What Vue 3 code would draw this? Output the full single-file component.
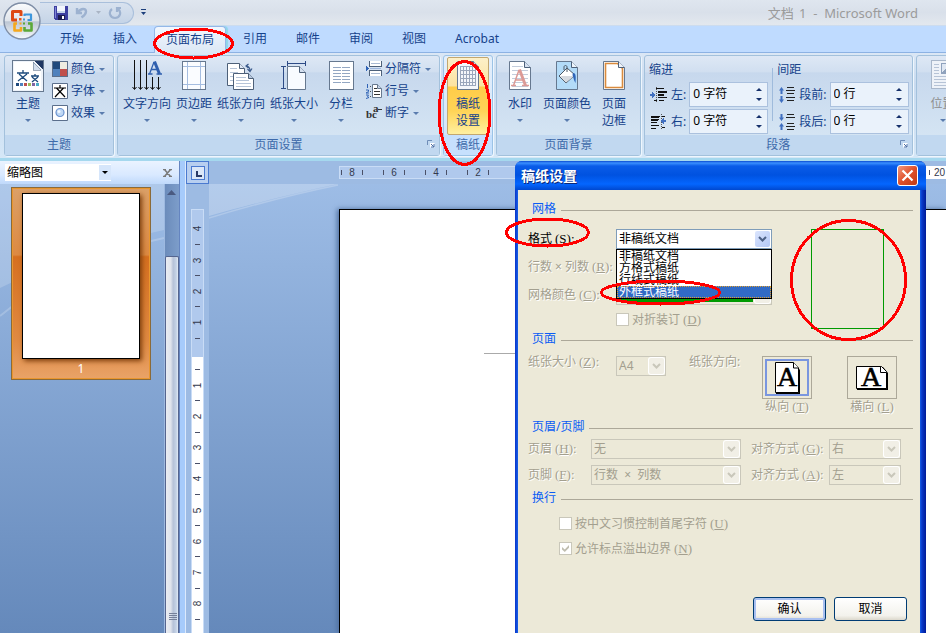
<script setup>
import { ref } from 'vue'

const tabs = ['开始', '插入', '页面布局', '引用', '邮件', '审阅', '视图', 'Acrobat']
const activeTab = ref('页面布局')

const indentLeft = ref('0 字符')
const indentRight = ref('0 字符')
const spaceBefore = ref('0 行')
const spaceAfter = ref('0 行')

const formats = ['非稿纸文档', '方格式稿纸', '行线式稿纸', '外框式稿纸']
const format = ref('非稿纸文档')
const hovered = ref('外框式稿纸')

const marginTicks = ['4', '', '3', '', '2', '', '1', '']
const pageTicks = ['', '1', '', '2', '', '3', '', '4', '', '5', '', '6', '', '7', '', '8', '']
const topTicks = ['8', '6', '4', '2']
const smallText = ref(false)
const overflowPunct = ref(true)
const foldBinding = ref(false)
</script>

<template>
  <div class="app">
    <header class="titlebar">
      <div class="qat">
        <button class="plain" aria-label="保存">
          <svg width="14" height="14" viewBox="0 0 14 14" shape-rendering="crispEdges">
            <path d="M0 0h14v14H1l-1-1z" fill="#3d3fa0" />
            <path d="M1 1h1v11H1z" fill="#7f86d8" />
            <path d="M3 0h8v7H3z" fill="#f2f6fc" />
            <path d="M3 5h8v2H3z" fill="#c5d3ea" />
            <path d="M4 9h7v5H4z" fill="#1c1c50" />
            <path d="M8 10h2v3H8z" fill="#fff" />
          </svg>
        </button>
        <button class="plain" aria-label="撤消">
          <svg width="14" height="14" viewBox="0 0 14 14">
            <path d="M2 2v5h5M3 6c3-4 8-4 8-.5 0 3-2.500 4.500-4.500 6" fill="none" stroke="#9db2d0" stroke-width="2.400" />
          </svg>
        </button>
        <svg class="qat-caret" width="5" height="3" viewBox="0 0 5 3"><path d="M0 0h5L2.500 3z" fill="#a9b4c4" /></svg>
        <button class="plain" aria-label="重复">
          <svg width="14" height="14" viewBox="0 0 14 14">
            <path d="M4 3C0 6 2 12 7 12s7-6 3-9M13 2H9v4" fill="none" stroke="#9db2d0" stroke-width="2.200" />
          </svg>
        </button>
      </div>
      <button class="plain customize" aria-label="自定义快速访问工具栏">
        <svg width="7" height="7" viewBox="0 0 7 7"><path d="M1 0h5v1H1zM1 3h5L3.500 6z" fill="#1d3f7c" /></svg>
      </button>
      <h1 class="title"><span class="doc">文档</span> 1 &nbsp;- &nbsp;Microsoft Word</h1>
    </header>

    <nav class="tabs">
      <button
        v-for="t in tabs"
        :key="t"
        class="tab"
        :class="{ active: t === activeTab }"
        @click="activeTab = t"
      >{{ t }}</button>
    </nav>

    <div class="ribbon">
      <section class="group theme">
        <div class="tools">
          <button class="big">
            <svg width="32" height="32" viewBox="0 0 32 32" shape-rendering="crispEdges">
              <path d="M.5.5h31v31H.5z" fill="#eef3fa" stroke="#66788f" />
              <path d="M2 2h19l8 8v20H2z" fill="#fff" />
              <path d="M22 1h9v9z" fill="#1f3763" /><path d="M21 2l8 8h-8z" fill="#d3deee" stroke="#66788f" stroke-width=".6" />
              <path d="M5 13h12M11 10v3M7 14l8 7M15 14l-9 7M19 16h8M23 14v2M20 17l6 5M26 17l-6 5" fill="none" stroke="#1d4a7c" stroke-width="1.300" shape-rendering="auto" />
              <path d="M4 23h3v3H4z" fill="#1f497d" /><path d="M8 23h3v3H8z" fill="#4f81bd" />
              <path d="M12 23h3v3h-3z" fill="#c0504d" /><path d="M16 23h3v3h-3z" fill="#9bbb59" />
              <path d="M20 23h3v3h-3z" fill="#8064a2" /><path d="M24 23h3v3h-3z" fill="#4bacc6" />
            </svg>
            <span>主题</span>
            <i class="caret"></i>
          </button>
          <div class="stack">
            <button class="small">
              <svg width="16" height="16" viewBox="0 0 16 16" shape-rendering="crispEdges">
                <path d="M0 0h16v16H0z" fill="#5b6f8c" /><path d="M1 1h7v7H1z" fill="#1f497d" /><path d="M8 1h7v7H8z" fill="#eeece1" />
                <path d="M1 8h7v7H1z" fill="#4f81bd" /><path d="M8 8h7v7H8z" fill="#c0504d" />
              </svg>
              <span>颜色</span><i class="caret"></i>
            </button>
            <button class="small">
              <svg width="16" height="16" viewBox="0 0 16 16">
                <path d="M.5.5h15v15H.5z" fill="#fff" stroke="#5b6f8c" />
                <path d="M2 5h12M8 2v3M4.500 5l8.500 9M11.500 5L3 14" fill="none" stroke="#000" stroke-width="1.200" />
              </svg>
              <span>字体</span><i class="caret"></i>
            </button>
            <button class="small">
              <svg width="16" height="16" viewBox="0 0 16 16">
                <path d="M.5.5h15v15H.5z" fill="#fff" stroke="#5b6f8c" />
                <circle cx="8" cy="7.500" r="4" fill="#bfd8f5" stroke="#6b93cf" stroke-width="1.200" />
                <circle cx="7" cy="6.500" r="1.500" fill="#f3f9ff" />
              </svg>
              <span>效果</span><i class="caret"></i>
            </button>
          </div>
        </div>
        <h2 class="caption">主题</h2>
      </section>

      <section class="group">
        <div class="tools">
          <button class="big">
            <svg width="32" height="32" viewBox="0 0 32 32">
              <path d="M3.500 0v29M9.500 0v29M15.500 0v29M21.500 17v12M27.500 17v12" stroke="#111" shape-rendering="crispEdges" />
              <path d="M1.500 27l2 2.500 2-2.500M7.500 27l2 2.500 2-2.500M13.500 27l2 2.500 2-2.500M19.500 27l2 2.500 2-2.500M25.500 27l2 2.500 2-2.500" fill="none" stroke="#111" />
              <path d="M18.500 14L23 2" fill="none" stroke="#2f5fae" stroke-width="1.300" />
              <path d="M23.500 1.500L28.500 14" fill="none" stroke="#2f5fae" stroke-width="3" />
              <path d="M20 9.500h7M17 14h4.500M25.500 14H31" fill="none" stroke="#2f5fae" stroke-width="1.500" />
            </svg>
            <span>文字方向</span><i class="caret"></i>
          </button>
          <button class="big">
            <svg width="32" height="32" viewBox="0 0 32 32" shape-rendering="crispEdges">
              <path d="M4.500 1.500h23v28h-23z" fill="#fafcff" stroke="#66788f" />
              <path d="M9.500 2v27M22.500 2v27M5 6.500h22M5 24.500h22" stroke="#a5bde0" />
            </svg>
            <span>页边距</span><i class="caret"></i>
          </button>
          <button class="big">
            <svg width="32" height="32" viewBox="0 0 32 32">
              <path d="M2.500 3.500h12l5 5v17h-17z" fill="#fff" stroke="#4d6079" />
              <path d="M14.500 3.500v5h5" fill="#dfe8f5" stroke="#4d6079" />
              <path d="M5 8.500h7M5 12.500h8M5 16.500h8M5 20.500h8" stroke="#b6c4d8" />
              <path d="M8.500 13.500h15l5 5v11h-20z" fill="#fff" stroke="#4d6079" />
              <path d="M23.500 13.500v5h5" fill="#b9c9df" stroke="#4d6079" />
              <path d="M11 17.500h10M11 20.500h13M11 23.500h15M11 26.500h15" stroke="#b6c4d8" />
              <path d="M21 6c3 0 4 2 4 5M22.500 9l2.500 2.500 2-3M23.500 4L21 6l2.500 2" fill="none" stroke="#3b5a8c" stroke-width="1.200" />
            </svg>
            <span>纸张方向</span><i class="caret"></i>
          </button>
          <button class="big">
            <svg width="32" height="32" viewBox="0 0 32 32">
              <path d="M9.500 6.500h12l6 6v17h-18z" fill="#f8fbff" stroke="#66788f" />
              <path d="M21.500 6.500v6h6" fill="#d5e0ef" stroke="#4d6079" />
              <path d="M9 3.500h18M9.500 1v5M27.500 1v5M5.500 6v22M3 6.500h5M3 28.500h5" fill="none" stroke="#2d4b86" shape-rendering="crispEdges" />
            </svg>
            <span>纸张大小</span><i class="caret"></i>
          </button>
          <button class="big">
            <svg width="32" height="32" viewBox="0 0 32 32" shape-rendering="crispEdges">
              <path d="M4.500 1.500h24v28h-24z" fill="#fff" stroke="#66788f" stroke-width="1" />
              <path d="M8 7.500h8M8 10.500h8M8 13.500h8M8 16.500h8M8 19.500h8M8 22.500h8M17 7.500h8M17 10.500h8M17 13.500h8M17 16.500h8M17 19.500h8M17 22.500h8" stroke="#93a7c3" />
            </svg>
            <span>分栏</span><i class="caret"></i>
          </button>
          <div class="stack inset">
            <button class="small">
              <svg width="16" height="16" viewBox="0 0 16 16" shape-rendering="crispEdges">
                <path d="M4 0h12v5H4zM4 10h12v5H4z" fill="#fff" /><path d="M3.500 0v5.500h12V0M3.500 15V9.500h12V15" fill="none" stroke="#4d6079" />
                <path d="M5 2.500h9M5 12.500h9" stroke="#a9bad3" /><path d="M4 7.500h11" stroke="#9db5dc" />
                <path d="M0 4l3 3.500L0 11z" fill="#2f62b5" />
              </svg>
              <span>分隔符</span><i class="caret"></i>
            </button>
            <button class="small">
              <svg width="16" height="16" viewBox="0 0 16 16">
                <path d="M6.500 1.500h5l4 4v9h-9z" fill="#fff" stroke="#66788f" /><path d="M11.500 1.500v4h4" fill="#c8d5e8" stroke="#66788f" />
                <path d="M8 5.500h3M8 8.500h6M8 11.500h6" stroke="#333" />
                <path d="M1.500 1v4M0 7h2.500v1.500L0 10h3M0 12h2.500L1.500 13.500 3 14.500 0 15.500" fill="none" stroke="#2f62b5" />
                <path d="M4.500 3v1M4.500 8v1M4.500 13v1" stroke="#555" />
              </svg>
              <span>行号</span><i class="caret"></i>
            </button>
            <button class="small">
              <svg width="16" height="16" viewBox="0 0 16 16" overflow="visible">
                <text class="glyph"><tspan x="0" y="13">bc</tspan><tspan x="7" y="7">a</tspan></text>
                <path d="M12 4.500h4" stroke="#333" />
              </svg>
              <span>断字</span><i class="caret"></i>
            </button>
          </div>
        </div>
        <h2 class="caption">页面设置</h2>
        <button class="launcher" aria-label="页面设置对话框">
          <svg width="8" height="8" viewBox="0 0 8 8"><path d="M.5 5V.5H5" fill="none" stroke="#6f8db8" /><path d="M3 3h4.500v4.500H3z" fill="#fff" /><path d="M4 4l3 3M7 4v3H4" fill="none" stroke="#4b6ea5" /></svg>
        </button>
      </section>

      <section class="group hot">
        <div class="tools">
          <button class="big pressed">
            <svg width="32" height="32" viewBox="0 0 32 32">
              <path d="M5.500 1.500h16l5 5v23h-21z" fill="#f4f6fa" stroke="#66788f" /><path d="M21.500 1.500v5h5" fill="#cbd6e6" stroke="#66788f" />
              <path d="M8.500 6.500h15v19h-15zM8 10.500h16M8 14.500h16M8 18.500h16M8 22.500h16M11.500 6v20M14.500 6v20M17.500 6v20M20.500 6v20" fill="none" stroke="#9aa6bb" shape-rendering="crispEdges" />
            </svg>
            <span>稿纸<br />设置</span>
          </button>
        </div>
        <h2 class="caption">稿纸</h2>
      </section>

      <section class="group">
        <div class="tools">
          <button class="big">
            <svg width="32" height="32" viewBox="0 0 32 32">
              <path d="M5.500 1.500h15l6 6v22h-21z" fill="#fff" stroke="#66788f" /><path d="M20.500 1.500v6h6" fill="#d5e0ef" stroke="#4d6079" />
              <path d="M8 6.500h11M8 10.500h16M8 14.500h16M8 18.500h16M8 22.500h16M8 26.500h16" stroke="#c3cddc" />
              <path d="M9.500 25.500L15 10M11.500 20h8M7 25.500h5M18 25.500h7" fill="none" stroke="#dc9a96" stroke-width="1.500" />
              <path d="M15.500 9.500l6 16" fill="none" stroke="#dc9a96" stroke-width="3" />
            </svg>
            <span>水印</span><i class="caret"></i>
          </button>
          <button class="big">
            <svg width="32" height="32" viewBox="0 0 32 32">
              <path d="M5.500 1.500h15l6 6v22h-21z" fill="#b3dbf8" stroke="#66788f" /><path d="M20.500 1.500v6h6" fill="#eef5fc" stroke="#4d6079" />
              <path d="M8 16l8-8 8 7-9 8z" fill="#fff" stroke="#4d5866" /><path d="M9 16h14l-8 6.500z" fill="#d5d9df" />
              <path d="M16 12V7c0-2-3-2-3 0v3" fill="none" stroke="#4d5866" /><path d="M22 13c3 0 3 3 2.500 10-2-3-2-6-3-8z" fill="#2e64b8" />
            </svg>
            <span>页面颜色</span><i class="caret"></i>
          </button>
          <button class="big">
            <svg width="32" height="32" viewBox="0 0 32 32">
              <path d="M5.500 1.500h15l6 6v22h-21z" fill="#fff" stroke="#66788f" /><path d="M7.500 3.500h12l5 5v19h-17z" fill="none" stroke="#d98b3e" stroke-width="1.600" />
              <path d="M20.500 1.500v6h6" fill="#eef3fa" stroke="#4d6079" />
            </svg>
            <span>页面<br />边框</span>
          </button>
        </div>
        <h2 class="caption">页面背景</h2>
      </section>

      <section class="group para">
        <div class="tools">
          <div class="measure">
            <h3>缩进</h3>
            <div class="field">
              <svg width="18" height="16" viewBox="0 0 18 16" shape-rendering="crispEdges">
                <path d="M6 1.500h8M8 4.500h9M8 7.500h6M8 10.500h9M4 13.500h3M9 13.500h5" stroke="#111" /><path d="M8 5h9v1H8zM8 8h6v1H8z" fill="#111" /><path d="M6.500 0v16" stroke="#555" stroke-dasharray="1 1" />
                <path d="M0 7h2V5l4 3-4 3V9H0z" fill="#3f6fc0" />
              </svg>
              <label for="indL">左:</label>
              <span class="spin"><input id="indL" v-model="indentLeft" /><span class="arrows"><button class="up" aria-label="增加"></button><button class="down" aria-label="减少"></button></span></span>
            </div>
            <div class="field">
              <svg width="18" height="16" viewBox="0 0 18 16" shape-rendering="crispEdges">
                <path d="M1 2.500h9M1 5.500h8M1 8.500h6M1 11.500h8M1 14.500h5M12 2.500h3M12 13.500h3" stroke="#111" /><path d="M1 3h8v1H1zM1 6h7v1H1z" fill="#111" /><path d="M11.500 0v16" stroke="#555" stroke-dasharray="1 1" />
                <path d="M16 6h-2V4l-4 3 4 3V8h2z" fill="#3f6fc0" />
              </svg>
              <label for="indR">右:</label>
              <span class="spin"><input id="indR" v-model="indentRight" /><span class="arrows"><button class="up" aria-label="增加"></button><button class="down" aria-label="减少"></button></span></span>
            </div>
          </div>
          <div class="measure">
            <h3>间距</h3>
            <div class="field">
              <svg width="18" height="16" viewBox="0 0 18 16">
                <path d="M9 .5h7M8 3.500h9M9 6.500h7M8 10.500h9M9 13.500h7" stroke="#222" /><path d="M3.500 0L6 3.500H4.500V7h-2V3.500H1zM3.500 16L6 12.500H4.500V9h-2v3.500H1z" fill="#3f6fc0" />
              </svg>
              <label for="spB">段前:</label>
              <span class="spin"><input id="spB" v-model="spaceBefore" /><span class="arrows"><button class="up" aria-label="增加"></button><button class="down" aria-label="减少"></button></span></span>
            </div>
            <div class="field">
              <svg width="18" height="16" viewBox="0 0 18 16">
                <path d="M9 .5h7M8 3.500h9M9 9.500h7M8 12.500h9M9 15.500h7" stroke="#222" /><path d="M3.500 7L6 3.500H4.500V0h-2v3.500H1zM3.500 9L6 12.500H4.500V16h-2v-3.500H1z" fill="#3f6fc0" />
              </svg>
              <label for="spA">段后:</label>
              <span class="spin"><input id="spA" v-model="spaceAfter" /><span class="arrows"><button class="up" aria-label="增加"></button><button class="down" aria-label="减少"></button></span></span>
            </div>
          </div>
        </div>
        <h2 class="caption">段落</h2>
        <button class="launcher" aria-label="段落对话框">
          <svg width="8" height="8" viewBox="0 0 8 8"><path d="M.5 5V.5H5" fill="none" stroke="#6f8db8" /><path d="M3 3h4.500v4.500H3z" fill="#fff" /><path d="M4 4l3 3M7 4v3H4" fill="none" stroke="#4b6ea5" /></svg>
        </button>
      </section>

      <section class="group arrange">
        <div class="tools">
          <button class="big" disabled>
            <svg width="32" height="32" viewBox="0 0 32 32" shape-rendering="crispEdges">
              <path d="M4.500.5h27v28h-27z" fill="#eef2f8" stroke="#a9b7ca" /><path d="M7 4.500h5M7 7.500h5M7 10.500h5M7 13.500h5M7 16.500h22M7 19.500h22M7 22.500h22M7 25.500h22" stroke="#b6c3d6" />
              <path d="M14.500 3.500h17v10h-17z" fill="#dfe7f2" stroke="#8fa2bd" /><path d="M15 13l5-6 4 5 3-3 4 4z" fill="#8fa2bd" />
            </svg>
            <span>位置</span><i class="caret"></i>
          </button>
        </div>
        <h2 class="caption"></h2>
      </section>
    </div>

    <main class="workspace">
      <aside class="pane">
        <div class="pane-head">
          <span class="picker">
            <select aria-label="窗格"><option>缩略图</option></select>
            <i class="picker-arrow"></i>
          </span>
          <button class="plain" aria-label="关闭窗格">
            <svg width="9" height="8" viewBox="0 0 9 8"><path d="M1 0l7 8M8 0L1 8M0 .5h3M6 .5h3M0 7.500h3M6 7.500h3" stroke="#7a7a7a" stroke-width="1.600" fill="none" /></svg>
          </button>
        </div>
        <div class="pane-body">
          <svg class="sheen" viewBox="0 0 164 140" width="164" height="140">
            <path d="M0 0h164v46C100 60 50 80 0 104z" fill="#fff" opacity=".18" />
            <path d="M164 54C100 68 45 95 0 132" fill="none" stroke="#fff" stroke-width="2" opacity=".2" />
          </svg>
          <div class="thumb"><div class="sheet"></div><span>1</span></div>
          <div class="scroll">
            <svg class="scroll-up" width="9" height="5" viewBox="0 0 9 5"><path d="M4.500 0L9 5H0z" fill="#4a5a80" /></svg>
            <div class="scroll-thumb"><i></i></div>
          </div>
        </div>
      </aside>
      <div class="splitter"></div>

      <div class="vruler">
        <button class="tabstop" aria-label="制表符">
          <svg width="14" height="14" viewBox="0 0 14 14" shape-rendering="crispEdges"><path d="M.5.5h13v13H.5z" fill="#dbe7f8" stroke="#4a7ad0" /><path d="M5 5h2v4h4v2H5z" fill="#2a3a66" /></svg>
        </button>
        <div class="vscale">
          <div class="vmargin">
            <span v-for="(t, i) in marginTicks" :key="i"><b v-if="t">{{ t }}</b><i v-else></i></span>
          </div>
          <div class="vpage">
            <span v-for="(t, i) in pageTicks" :key="i"><b v-if="t">{{ t }}</b><i v-else></i></span>
          </div>
        </div>
      </div>

      <div class="canvas">
        <div class="hruler">
          <div class="hscale">
            <div class="hmargin"><span v-for="t in topTicks" :key="t"><i></i><b>{{ t }}</b><i></i></span></div>
            <div class="hpage"><i></i><b>20</b></div>
          </div>
        </div>
        <div class="desk">
          <svg class="sheen" viewBox="0 0 130 40" width="130" height="40">
            <path d="M0 0h129C85 9 40 21 0 32z" fill="#fff" opacity=".24" />
            <path d="M0 34C40 22 85 10 129 1" fill="none" stroke="#fff" stroke-width="1.500" opacity=".22" />
          </svg>
          <div class="page"><div class="rule"></div></div>
        </div>
      </div>

      <div class="dialog" role="dialog" aria-label="稿纸设置">
        <div class="dlg-title">
          <h2>稿纸设置</h2>
          <button class="close" aria-label="关闭">
            <svg width="13" height="13" viewBox="0 0 13 13"><path d="M1.500 1.500l10 10M11.500 1.500l-10 10" stroke="#fff" stroke-width="2.200" /></svg>
          </button>
        </div>
        <div class="dlg-body">
          <section>
            <h3 class="legend">网格</h3>
            <div class="grid-area">
              <div class="fields">
                <div class="row">
                  <label class="wide" for="fmt">格式<span class="key">(<u>S</u>):</span></label>
                  <span class="combo">
                    <select id="fmt" v-model="format"><option v-for="f in formats" :key="f">{{ f }}</option></select>
                    <span class="drop"><svg width="9" height="7" viewBox="0 0 9 7"><path d="M1 1l3.500 3.500L8 1" /></svg></span>
                    <ul class="list">
                      <li v-for="f in formats" :key="f" :class="{ on: f === hovered }" @mouseenter="hovered = f">{{ f }}</li>
                    </ul>
                  </span>
                </div>
                <div class="row off"><span class="wide">行数<span class="times">×</span>列数<span class="key">(<u>R</u>):</span></span></div>
                <div class="row off">
                  <label class="wide" for="clr">网格颜色<span class="key">(<u>C</u>):</span></label>
                  <span class="combo"><select id="clr" disabled></select><i class="green"></i><span class="drop"><svg width="9" height="7" viewBox="0 0 9 7"><path d="M1 1l3.500 3.500L8 1" /></svg></span></span>
                </div>
                <div class="row short off">
                  <span class="wide"></span>
                  <label class="check"><input v-model="foldBinding" type="checkbox" disabled />对折装订<span class="key">(<u>D</u>)</span></label>
                </div>
              </div>
              <div class="preview"></div>
            </div>
          </section>

          <section>
            <h3 class="legend">页面</h3>
            <div class="page-area off">
              <label class="wide" for="size">纸张大小<span class="key">(<u>Z</u>):</span></label>
              <span class="combo"><select id="size" disabled><option>A4</option></select><span class="drop"><svg width="9" height="7" viewBox="0 0 9 7"><path d="M1 1l3.500 3.500L8 1" /></svg></span></span>
              <span class="dir">纸张方向:</span>
              <div class="orients">
                <div class="orient">
                  <button id="portrait" class="chosen" aria-label="纵向" disabled>
                    <svg width="28" height="34" viewBox="0 0 28 34">
                      <path d="M3 2h18l6 7v24H3z" fill="#000" /><path d="M2.500 1.500h18l5 5.500v24.500h-23z" fill="#fff" stroke="#000" />
                      <path d="M20.500 1.500V7h5" fill="#fff" stroke="#000" /><text x="14" y="25" class="bigA">A</text>
                    </svg>
                  </button>
                  <label for="portrait">纵向<span class="key">(<u>T</u>)</span></label>
                </div>
                <div class="orient">
                  <button id="landscape" aria-label="横向" disabled>
                    <svg width="34" height="34" viewBox="0 -3 34 34">
                      <path d="M2 3h26l5 6v17H2z" fill="#000" /><path d="M1.500 2.500h25l5 5v17h-30z" fill="#fff" stroke="#000" />
                      <path d="M25.500 2.500v6h6" fill="#fff" stroke="#000" /><text x="16" y="22" class="bigA">A</text>
                    </svg>
                  </button>
                  <label for="landscape">横向<span class="key">(<u>L</u>)</span></label>
                </div>
              </div>
            </div>
          </section>

          <section>
            <h3 class="legend">页眉/页脚</h3>
            <div class="hf off">
              <label for="hd">页眉<span class="key">(<u>H</u>):</span></label>
              <span class="combo"><select id="hd" disabled><option>无</option></select><span class="drop"><svg width="9" height="7" viewBox="0 0 9 7"><path d="M1 1l3.500 3.500L8 1" /></svg></span></span>
              <label for="hda">对齐方式<span class="key">(<u>G</u>):</span></label>
              <span class="combo"><select id="hda" disabled><option>右</option></select><span class="drop"><svg width="9" height="7" viewBox="0 0 9 7"><path d="M1 1l3.500 3.500L8 1" /></svg></span></span>
              <label for="ft">页脚<span class="key">(<u>F</u>):</span></label>
              <span class="combo"><select id="ft" disabled><option>行数 &nbsp;× &nbsp;列数</option></select><span class="drop"><svg width="9" height="7" viewBox="0 0 9 7"><path d="M1 1l3.500 3.500L8 1" /></svg></span></span>
              <label for="fta">对齐方式<span class="key">(<u>A</u>):</span></label>
              <span class="combo"><select id="fta" disabled><option>左</option></select><span class="drop"><svg width="9" height="7" viewBox="0 0 9 7"><path d="M1 1l3.500 3.500L8 1" /></svg></span></span>
            </div>
          </section>

          <section>
            <h3 class="legend">换行</h3>
            <div class="wraps off">
              <label class="check"><input v-model="smallText" type="checkbox" disabled />按中文习惯控制首尾字符<span class="key">(<u>U</u>)</span></label>
              <label class="check"><input v-model="overflowPunct" type="checkbox" disabled />允许标点溢出边界<span class="key">(<u>N</u>)</span></label>
            </div>
          </section>

          <div class="actions">
            <button class="default">确认</button>
            <button>取消</button>
          </div>
        </div>
      </div>
    </main>

    <button class="orb" aria-label="Office 按钮">
      <svg width="38" height="38" viewBox="0 0 38 38">
        <defs>
          <linearGradient id="orbFill" x1="0" y1="0" x2="0" y2="1">
            <stop offset="0" stop-color="#fbfcfd" /><stop offset=".5" stop-color="#dfe4eb" />
            <stop offset=".52" stop-color="#bcc6d4" /><stop offset="1" stop-color="#f6f9fc" />
          </linearGradient>
        </defs>
        <circle cx="19" cy="19" r="18" fill="url(#orbFill)" stroke="#7f8ea6" stroke-width="1.400" />
        <g fill="none" stroke-linejoin="round">
          <path d="M14 18H9.500V9.500H18V14" stroke="#dd4814" stroke-width="3" />
          <path d="M21.500 14v-1.500h6.500V18h-3.500" stroke="#3f97dc" stroke-width="2.200" />
          <path d="M14 21.500h-2.500v7H18V25" stroke="#f5a81c" stroke-width="2.600" />
          <path d="M21.500 25v3.500h7v-7h-3.500" stroke="#5ba838" stroke-width="2.600" />
        </g>
        <path d="M16 16h2.500v2.500H16z" fill="#e8571b" /><path d="M20 16.500h2v2h-2z" fill="#3f97dc" />
        <path d="M16.500 20.500h2v2h-2z" fill="#f5a81c" /><path d="M20 20.500h2v2h-2z" fill="#5ba838" />
      </svg>
    </button>

    <svg class="marks" width="946" height="633" viewBox="0 0 946 633" shape-rendering="crispEdges">
      <ellipse cx="193.500" cy="43.500" rx="39" ry="14.500" />
      <ellipse cx="464.500" cy="113" rx="25.500" ry="51.500" />
      <ellipse cx="547.500" cy="232.500" rx="41" ry="13.500" />
      <ellipse cx="660.500" cy="292.500" rx="59" ry="11.500" />
      <ellipse cx="848.500" cy="280" rx="57" ry="59.500" />
    </svg>
  </div>
</template>

<style>
body { margin: 0; overflow: hidden; }
</style>

<style scoped>
.app {
  position: relative;
  display: flex;
  flex-direction: column;
  height: 100vh;
  overflow: hidden;
  background: #bfdbff;
  color: #15428b;
  font: 12px/16px "Noto Sans", "Noto Sans CJK SC", sans-serif;
}
.app * { box-sizing: border-box; }
button, input, select { font: inherit; color: inherit; margin: 0; }
h1, h2, h3, ul { margin: 0; padding: 0; font: inherit; }
svg { display: block; flex: none; }
.plain { padding: 0; border: 0; background: none; }
.sheen { position: absolute; left: 0; top: 0; }

/* title bar and tabs */
.titlebar {
  flex: none;
  display: flex;
  align-items: center;
  height: 26px;
  padding-left: 40px;
  border-bottom: 1px solid #cddcee;
  background: linear-gradient(#dfe6ef, #d9e0ea 50%, #e3e8ee);
}
.qat {
  display: flex;
  align-items: center;
  gap: 7px;
  height: 22px;
  padding: 0 11px 0 14px;
  border: 1px solid #a9bfdb;
  border-left: 0;
  border-radius: 0 11px 11px 0;
  background: linear-gradient(#d8e2ef, #c5d4e7);
}
.customize { margin-left: 6px; }
.title { margin-left: auto; padding-right: 28px; color: #9b9b9b; font-size: 13px; white-space: nowrap; }
.title .doc { margin-right: 2px; }
.tabs { flex: none; display: flex; gap: 5px; height: 27px; padding-left: 48px; border-bottom: 1px solid #8db2e3; }
.tab { height: 26px; padding: 0 12px; border: 0; background: none; line-height: 26px; white-space: nowrap; }
.tab.active {
  height: 27px;
  border: 1px solid #93b7e8;
  border-bottom: 0;
  border-radius: 4px 4px 0 0;
  padding: 0 11px;
  background: linear-gradient(#f2f7fe, #dbe7f5);
  box-shadow: 2px 0 1px #8fd6e8;
}

/* ribbon */
.ribbon {
  flex: none;
  display: flex;
  gap: 3px;
  height: 108px;
  padding: 2px 0 2px 4px;
  overflow: hidden;
  border-bottom: 3px solid #a5d8ee;
  background: linear-gradient(#dbe7f5, #c9dbf0 30%, #d5e7f7);
}
.group {
  position: relative;
  flex: none;
  display: flex;
  flex-direction: column;
  border: 1px solid #a3c1dc;
  border-radius: 3px;
  background: linear-gradient(#dee8f5, #d1dff0 16%, #c7d8ed 17%, #d8e8f5);
  box-shadow: 1px 1px 0 #eef6fd;
}
.tools { flex: 1; display: flex; gap: 5px; padding: 4px 8px 0 5px; }
.theme .tools { gap: 6px; }
.caption { height: 20px; background: #c1d8f0; color: #3e6aaa; line-height: 19px; text-align: center; }
.big {
  display: flex;
  flex-direction: column;
  align-items: center;
  min-width: 36px;
  padding: 0;
  border: 0;
  background: none;
  line-height: 17px;
  white-space: nowrap;
}
.big span { padding-top: 3px; }
.big .caret { margin: 7px 0 0; }
.big:disabled { color: #8d8d8d; }
.caret { display: block; border: 3px solid transparent; border-top-color: #5a7cae; border-bottom: 0; }
.stack { display: flex; flex-direction: column; margin-top: -2px; }
.stack.inset { padding-left: 2px; }
.small { display: flex; align-items: center; height: 22px; padding: 0; border: 0; background: none; white-space: nowrap; }
.small span { margin: 0 4px 0 3px; }
.glyph { font: bold 11px "Liberation Serif", serif; fill: #333; }
.launcher { position: absolute; right: 4px; bottom: 7px; padding: 0; border: 0; background: none; }
.hot { background: linear-gradient(#e4effb, #d8e8fa 60%, #cfe3fb); border-color: #9cc3e6; }
.hot .tools { padding: 1px 3px 0; }
.hot .caption { background: #c6e0fd; }
.pressed {
  height: 78px;
  padding: 2px 2px 0;
  min-width: 42px;
  border: 1px solid #c2a770;
  border-radius: 2px;
  background: linear-gradient(#fdf0c8, #fce3a0 37%, #ffcc48 38%, #ffd457 70%, #fff0a0);
}
.para .tools { gap: 9px; padding: 6px 3px 0 4px; }
.measure { display: flex; flex-direction: column; gap: 2px; }
.measure + .measure { position: relative; }
.measure + .measure::before { content: ""; position: absolute; left: -5px; top: 6px; bottom: 14px; border-left: 1px solid #9fbbdc; }
.measure h3 { height: 18px; }
.field { display: flex; align-items: center; gap: 3px; height: 25px; padding-left: 1px; }
.spin { display: flex; width: 79px; height: 25px; margin-left: auto; border: 1px solid #abc1de; background: #eaf2fb; }
.spin input { flex: 1; min-width: 0; padding: 0 0 2px 3px; border: 0; background: none; color: #000; outline: 0; }
.arrows { display: flex; flex-direction: column; justify-content: center; gap: 7px; width: 17px; align-items: center; }
.arrows button { padding: 0; width: 0; height: 3px; background: none; border: 3px solid transparent; }
.arrows .up { border-top: 0; border-bottom-color: #15306b; }
.arrows .down { border-bottom: 0; border-top-color: #15306b; }
.arrange { flex: 1 0 70px; }
.arrange .tools { padding-left: 8px; }

/* workspace */
.workspace { position: relative; flex: 1; display: flex; min-height: 0; overflow: hidden; background: linear-gradient(#a0bfe8, #6589bb); }
.pane { flex: none; display: flex; flex-direction: column; width: 179px; }
.pane-head {
  display: flex;
  align-items: center;
  justify-content: space-between;
  height: 23px;
  padding: 0 7px 0 5px;
  background: linear-gradient(#eaf3ff, #d9e9ff 60%, #bfd9fb);
}
.picker { position: relative; display: flex; width: 106px; height: 17px; background: #fff; }
.picker select { flex: 1; appearance: none; padding: 0 2px; border: 0; background: none; color: #000; line-height: 15px; }
.picker-arrow { width: 12px; margin: 1px 0; background: #d6e6fb; }
.picker-arrow::after { content: ""; display: block; margin: 6px 3px 0; border: 3px solid transparent; border-top-color: #000; border-bottom: 0; }
.pane-body { position: relative; flex: 1; display: flex; justify-content: space-between; align-items: flex-start; padding-left: 11px; }
.thumb {
  position: relative;
  width: 140px;
  margin-top: 3px;
  padding: 5px 10px 2px;
  border: 1px solid #8a6a3a;
  background: linear-gradient(#dba068, #dd8a42 35%, #d67020 36%, #e08a42 80%, #e9a368);
  box-shadow: inset 0 0 0 1px #e9962e;
  color: #fff;
  text-align: center;
}
.sheet { height: 166px; border: 1px solid #000; background: #fff; box-shadow: 2px 2px 5px #7a3c0c; }
.thumb span { display: block; padding-top: 2px; line-height: 16px; }
.scroll { align-self: stretch; display: flex; flex-direction: column; width: 15px; border-left: 1px solid #9db9e0; background: linear-gradient(90deg, #6b8cbb, #7d9dca); }
.scroll-up { margin: 6px 2px 61px; }
.scroll-thumb {
  position: relative;
  flex: 1;
  border: 1px solid #55658f;
  border-bottom: 0;
  border-radius: 2px 2px 0 0;
  background: linear-gradient(90deg, #e9ecf2, #dfe3ec 40%, #b6c2d8 60%, #c4d2e6 85%, #e3ebf6);
}
.scroll-thumb i { position: absolute; left: 3px; bottom: 12px; width: 8px; height: 8px; background: repeating-linear-gradient(#76809a 0 1px, transparent 1px 2px); }
.splitter { flex: none; width: 7px; border-left: 1px solid #6585c0; border-right: 1px solid #dbe9fc; background: #a6cbfb; }
.vruler { flex: none; display: flex; flex-direction: column; width: 23px; background: #9dbbe3; }
.tabstop { flex: none; display: flex; align-items: center; justify-content: center; height: 23px; padding: 0; border: 1px solid #4a7ad0; background: #b8cff0; }
.vscale { flex: 1; min-height: 0; overflow: hidden; width: 13px; margin: 25px 0 0 5px; border: 1px solid #c9dcf6; border-bottom: 0; background: #fff; }
.vmargin { display: flex; flex-direction: column; height: 147px; padding: 11px 0; background: #b0c9ed; }
.vpage { display: flex; flex-direction: column; height: 265px; margin-top: 5px; }
.vscale span { flex: 1; display: flex; align-items: center; justify-content: center; }
.vscale i { width: 5px; height: 1px; background: #4a5068; }
.vscale b { font: 10px/11px "Liberation Sans", sans-serif; color: #33394d; transform: rotate(-90deg); }
.canvas { flex: 1; display: flex; flex-direction: column; min-width: 0; }
.hruler { flex: none; height: 23px; padding: 5px 0 0 130px; background: #9dbbe3; }
.hscale { display: flex; justify-content: space-between; height: 13px; }
.hmargin { display: flex; flex: 1; gap: 20px; padding-left: 1px; border: 1px solid #c9dcf6; background: #b0c9ed; }
.hscale b { font: 10px/11px "Liberation Sans", sans-serif; color: #33394d; }
.hmargin span { flex: none; display: flex; justify-content: space-between; align-items: center; width: 22px; }
.hscale i { width: 1px; height: 5px; background: #4a5068; }
.hpage { display: flex; align-items: center; gap: 4px; width: 20px; padding-left: 3px; background: #fff; }
.desk { position: relative; flex: 1; display: flex; padding: 25px 0 0 130px; }
.page { position: relative; flex: 1; border: solid #000; border-width: 1px 0 0 1px; background: #fff; box-shadow: -2px 0 5px #4f6f9f; padding: 143px 60px 0 144px; }
.rule { border-top: 1px solid #aaa; }

/* dialog window */
.dialog {
  position: absolute;
  left: 515px;
  top: 0;
  bottom: 0;
  width: 411px;
  display: flex;
  flex-direction: column;
  border-radius: 7px 7px 0 0;
  background: linear-gradient(90deg, #0a34c8, #1660e8 3px, #1660e8 405px, #0838c8 407px, #001c98);
  overflow: hidden;
}
.dlg-title {
  flex: none;
  display: flex;
  align-items: center;
  justify-content: space-between;
  height: 29px;
  padding: 0 8px 0 6px;
  background: linear-gradient(#0a4ad0, #3a90ff 2px, #0a5ce8 5px, #0052e0 14px, #0466ff 23px, #0048d0);
}
.dlg-title h2 { color: #fff; font-size: 14px; font-weight: bold; text-shadow: 1px 1px 0 #0a2878; }
.close {
  display: flex;
  align-items: center;
  justify-content: center;
  width: 21px;
  height: 21px;
  padding: 0;
  border: 1px solid #fff;
  border-radius: 3px;
  background: linear-gradient(135deg, #f09a80, #e0502a 50%, #c03a14);
}
.dlg-body { flex: 1; margin: 0 6px 0 3px; padding: 10px 7px 0 10px; background: #ece9d8; color: #000; }
.legend { display: flex; align-items: center; gap: 5px; height: 18px; padding-left: 4px; color: #0a5cf5; }
.legend::after { content: ""; flex: 1; margin-top: 3px; border-top: 1px solid #aca899; }
.grid-area { display: flex; align-items: flex-start; padding-top: 7px; }
.fields { flex: 1; }
.row { display: flex; align-items: center; height: 28px; }
.row.short { height: 21px; }
.wide { flex: none; width: 88px; white-space: nowrap; }
.times { padding: 0 3px; }
.off { color: #a39f8f; text-shadow: 1px 1px 0 #fff; }
.key { margin-left: 3px; font: 13px/14px "Liberation Serif", serif; }
.combo { position: relative; display: flex; width: 156px; height: 20px; border: 1px solid #7f9db9; background: #fff; }
.off .combo { border-color: #c9c7ba; background: #ece9d8; }
.combo select { flex: 1; width: 100%; appearance: none; padding: 0 18px 0 2px; border: 0; background: none; line-height: 16px; opacity: 1; outline: 0; text-shadow: none; }
.drop {
  position: absolute;
  right: 1px;
  top: 1px;
  display: flex;
  align-items: center;
  justify-content: center;
  width: 15px;
  height: 16px;
  border-radius: 2px;
  background: linear-gradient(135deg, #dbe5fd, #b3c8f6);
  pointer-events: none;
}
.drop path { fill: none; stroke: #4d6185; stroke-width: 2; }
.off .drop { background: #f1efe6; box-shadow: 0 0 0 1px #fff; }
.off .drop path { stroke: #c9c7ba; }
.green { position: absolute; left: 2px; top: 2px; right: 18px; bottom: 2px; background: #009a00; }
.list { position: absolute; z-index: 2; left: -1px; right: -1px; top: 19px; border: 1px solid #000; background: #fff; list-style: none; }
.list li { height: 12px; padding-left: 2px; line-height: 12px; }
.list .on { outline: 1px dotted #e0a030; outline-offset: -1px; background: #316ac5; color: #fff; }
.check { display: flex; align-items: center; text-shadow: none; white-space: nowrap; }
.check input { appearance: none; width: 13px; height: 13px; margin-right: 3px; border: 1px solid #c9c7ba; background: #fff; }
.check input:checked::before {
  content: "";
  display: block;
  width: 7px;
  height: 7px;
  margin: 2px;
  background: #c0beb0;
  clip-path: polygon(0 30%, 40% 65%, 100% 0, 100% 40%, 40% 100%, 0 65%);
}
.preview { width: 73px; height: 100px; margin: 4px 29px 0 0; border: 1px solid #009a00; }
.page-area { display: flex; align-items: flex-start; height: 70px; padding-top: 8px; }
.page-area .combo { width: 50px; }
.page-area > .wide { margin-top: -2px; }
.dir { margin: -2px 0 0 23px; white-space: nowrap; }
.orients { flex: 1; display: flex; justify-content: flex-end; gap: 35px; padding-right: 16px; }
.orient { display: flex; flex-direction: column; align-items: center; width: 50px; white-space: nowrap; }
.orient button { display: flex; align-items: center; justify-content: center; width: 50px; height: 43px; padding: 0; border: 1px solid #aca899; background: #ece9d8; }
.orient .chosen { box-shadow: inset 0 0 0 2px #ece9d8, inset 0 0 0 4px #7a96df; }
.orient label { line-height: 16px; }
.bigA { font: 28px "Liberation Serif", serif; text-anchor: middle; fill: #000; stroke: #000; stroke-width: .6; text-shadow: none; }
.hf { display: grid; grid-template-columns: 63px 150px 88px 72px; grid-auto-rows: 26px; align-items: center; height: 53px; white-space: nowrap; }
.hf .combo { width: auto; }
.hf label:nth-of-type(even) { padding-left: 10px; }
.wraps { display: flex; flex-direction: column; padding: 4px 0 0 31px; }
.wraps .check { height: 25px; }
.actions { display: flex; justify-content: flex-end; gap: 8px; padding: 36px 6px 0 0; }
.actions button { width: 73px; height: 24px; padding: 0; border: 1px solid #003c74; border-radius: 3px; background: linear-gradient(#fff, #f3f2ec 80%, #dcd8cc); }
.actions .default { box-shadow: inset 0 0 0 2px #a9c0f0; }

/* overlays */
.orb { position: absolute; left: 3px; top: 2px; padding: 0; border: 0; border-radius: 50%; background: none; }
.marks { position: absolute; left: 0; top: 0; z-index: 5; pointer-events: none; }
.marks ellipse { fill: none; stroke: #f00; stroke-width: 3; }
</style>
